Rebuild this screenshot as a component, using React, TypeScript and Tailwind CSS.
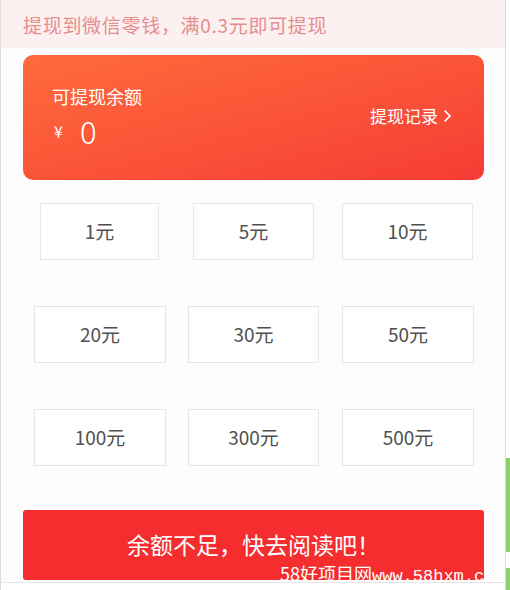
const rows = [
  {
    pad: 'pl-[39px]',
    items: [
      { label: '1元', cls: 'w-[119px]' },
      { label: '5元', cls: 'w-[121px] ml-[34px]' },
      { label: '10元', cls: 'w-[131px] ml-[28px]' },
    ],
  },
  {
    pad: 'pl-[33px]',
    items: [
      { label: '20元', cls: 'w-[132px]' },
      { label: '30元', cls: 'w-[131px] ml-[22px]' },
      { label: '50元', cls: 'w-[132px] ml-[23px]' },
    ],
  },
  {
    pad: 'pl-[33px]',
    items: [
      { label: '100元', cls: 'w-[132px]' },
      { label: '300元', cls: 'w-[131px] ml-[22px]' },
      { label: '500元', cls: 'w-[132px] ml-[23px]' },
    ],
  },
];

export default function App() {
  return (
    <div className="flex w-[510px] h-[590px] overflow-hidden bg-white font-['Noto_Sans_CJK_SC','Noto_Sans',sans-serif]">
      <div className="flex flex-col w-[505px] border-l border-[#dcdcdc] bg-[#fdfdfd]">
        {/* tip banner */}
        <div className="h-[48px] shrink-0 flex items-center pl-[22px] pt-[3px] bg-[#fdf0f0] text-[19px] tracking-[0.7px] text-[#e58d8f]">
          提现到微信零钱，满0.3元即可提现
        </div>

        {/* balance card */}
        <div className="mt-[7px] ml-[22px] w-[461px] h-[125px] shrink-0 rounded-[10px] bg-gradient-to-br from-[#ff6a3b] to-[#f53b35] flex items-center justify-between pl-[29px] pr-[32px] text-white">
          <div className="flex flex-col mt-[-6px]">
            <div className="text-[18px] leading-[24px]">可提现余额</div>
            <div className="flex items-center mt-[7px] h-[30px]">
              <span className="text-[16px] mr-[17px] ml-[2px] mt-[2px]">¥</span>
              <span className="text-[31px] leading-none font-light">0</span>
            </div>
          </div>
          <div className="flex items-center gap-[5px] text-[17px] mt-[-4px]">
            <span>提现记录</span>
            <svg width="9" height="14" viewBox="0 0 9 14" fill="none" stroke="white" strokeWidth="1.6">
              <path d="M1.5 1.5 L7 7 L1.5 12.5" />
            </svg>
          </div>
        </div>

        {/* amount options */}
        <div className="flex flex-col gap-[46px] mt-[23px]">
          {rows.map((row, ri) => (
            <div key={ri} className={`flex ${row.pad}`}>
              {row.items.map((it) => (
                <div
                  key={it.label}
                  className={`${it.cls} h-[57px] border border-[#e6e6e6] bg-white flex items-center justify-center text-[19px] text-[#505050]`}
                >
                  {it.label}
                </div>
              ))}
            </div>
          ))}
        </div>

        {/* action button */}
        <div className="relative mt-[44px] ml-[22px] w-[461px] h-[70px] shrink-0 rounded-[3px] bg-[#f52d2f] overflow-hidden flex items-center justify-center text-white text-[23px]">
          <span className="mt-[-2px]">余额不足，快去阅读吧！</span>
          <span className="absolute left-[257px] top-[54px] text-[18px] leading-[18px] whitespace-nowrap">
            58好项目网<span className="font-['Liberation_Mono',monospace] text-[17px]">www.58hxm.com</span>
          </span>
        </div>
        <div className="mt-[2px] border-t border-[#e6e6e6] flex-1 bg-white" />
      </div>

      {/* right gutter */}
      <div className="w-[1px] bg-[#d8d8d8]" />
      <div className="flex-1 flex flex-col bg-white">
        <div className="h-[458px]" />
        <div className="h-[94px] bg-[#8fd264]" />
        <div className="h-[16px]" />
        <div className="flex-1 bg-[#8fd264]" />
      </div>
    </div>
  );
}
